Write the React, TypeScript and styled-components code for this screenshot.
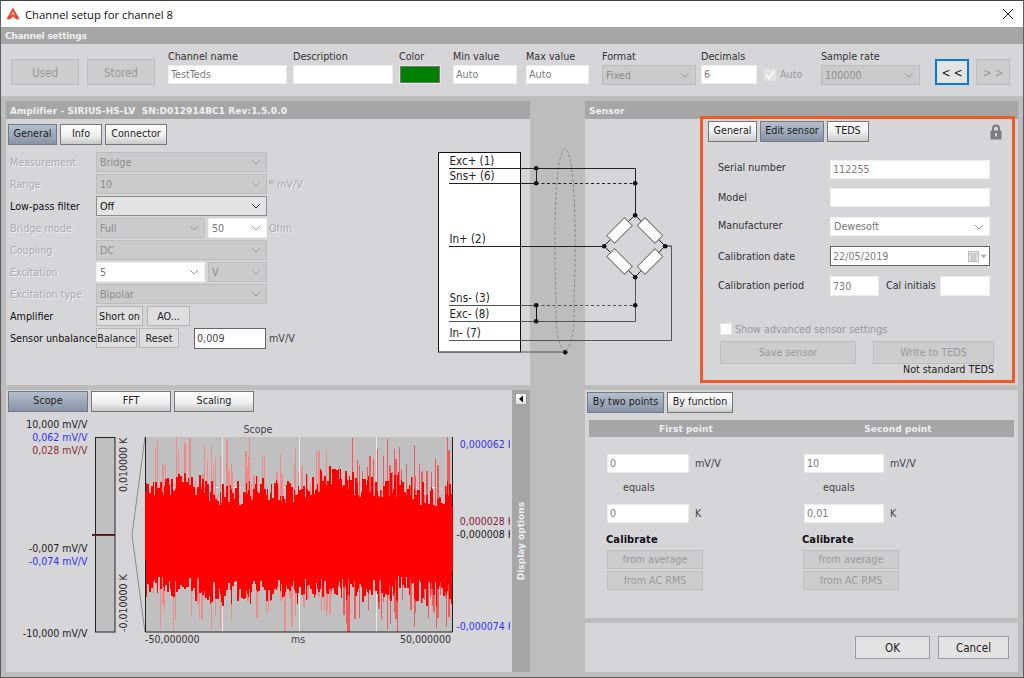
import React, { useMemo } from 'react';
import styled, { createGlobalStyle } from 'styled-components';

const GlobalStyle = createGlobalStyle`
  html, body { margin: 0; padding: 0; }
  body {
    width: 1024px;
    height: 678px;
    overflow: hidden;
    font-family: "DejaVu Sans Condensed", "Noto Sans", sans-serif;
    font-stretch: condensed;
    font-size: 10.7px;
    color: #222;
  }
  * { box-sizing: border-box; }
`;

const Window = styled.div`
  width: 1024px;
  height: 678px;
  display: flex;
  flex-direction: column;
  border: 1px solid #5f5f5f;
  border-top-color: #444;
  background: #d6d5d8;
`;

const TitleBar = styled.div`
  height: 26px;
  flex: none;
  display: flex;
  align-items: center;
  padding: 0 9px 0 5px;
  background: #fff;
  font-family: "Open Sans", sans-serif;
  font-stretch: normal;
  font-size: 11.3px;
  color: #111;
  gap: 5px;
  svg:last-child { margin-left: auto; }
`;

const Bar = styled.div<{ $h?: number; $ls?: number }>`
  height: ${(p) => p.$h ?? 18}px;
  flex: none;
  display: flex;
  align-items: center;
  padding: 1px 4px 0;
  background: #a6a6a6;
  color: #f0f0f0;
  font-family: "DejaVu Sans", sans-serif;
  font-stretch: normal;
  font-weight: 700;
  font-size: 9px;
  letter-spacing: ${(p) => p.$ls ?? 0.08}px;
`;

const Toolbar = styled.div`
  height: 52px;
  flex: none;
  display: flex;
  align-items: flex-start;
  padding: 5px 0 0 10px;
  background: #d6d5d8;
`;

const ToolButton = styled.div<{ $w: number; $ml?: number; $focus?: boolean }>`
  width: ${(p) => p.$w}px;
  margin-left: ${(p) => p.$ml ?? 0}px;
  height: 26px;
  margin-top: 10px;
  padding-top: 2px;
  display: flex;
  align-items: center;
  justify-content: center;
  flex: none;
  font-size: 11.5px;
  background: ${(p) => (p.$focus ? '#e4e4e4' : '#cdcdcd')};
  border: ${(p) => (p.$focus ? '2px solid #0a78d7' : '1px solid #bcbcbc')};
  color: ${(p) => (p.$focus ? '#111' : '#9a9a9a')};
`;

const ToolField = styled.div<{ $w: number; $ml: number }>`
  width: ${(p) => p.$w}px;
  margin-left: ${(p) => p.$ml}px;
  flex: none;
  display: flex;
  flex-direction: column;
`;

const ToolLabel = styled.div`
  height: 16px;
  line-height: 16px;
  color: #333;
  white-space: nowrap;
`;

const Field = styled.div<{ $w?: number; $dark?: boolean }>`
  width: ${(p) => (p.$w ? `${p.$w}px` : '100%')};
  height: 19px;
  flex: none;
  display: flex;
  align-items: center;
  padding: 0 2px;
  background: #fff;
  color: #7c7c7c;
  border: ${(p) => (p.$dark ? '1px solid #666' : '1px solid #ececec')};
  white-space: nowrap;
`;

const ColorSwatch = styled.div`
  height: 19px;
  background: #008000;
  border: 1px solid #e8e8e8;
  outline: 1px solid #777;
  outline-offset: -2px;
`;

const AutoCheck = styled.div`
  margin: 16px 0 0 7px;
  width: 46px;
  height: 19px;
  flex: none;
  display: flex;
  align-items: center;
  gap: 4px;
  color: #9a9a9a;
`;

const Body = styled.div`
  position: relative;
  flex: 1;
  display: grid;
  grid-template-columns: 524px 433px;
  justify-content: space-between;
  padding: 5px;
  background: #bdbdbd;
  min-height: 0;
`;

const Column = styled.div`
  display: flex;
  flex-direction: column;
  gap: 5px;
  min-height: 0;
`;

const Panel = styled.div<{ $h?: number }>`
  background: #d6d5d8;
  display: flex;
  flex-direction: column;
  flex: ${(p) => (p.$h ? 'none' : '1')};
  height: ${(p) => (p.$h ? `${p.$h}px` : 'auto')};
  min-height: 0;
`;

const Tabs = styled.div<{ $pad?: string }>`
  display: flex;
  gap: 3px;
  padding: ${(p) => p.$pad ?? '5px 0 0 2px'};
  flex: none;
`;

const Tab = styled.div<{ $w: number; $active?: boolean; $h?: number }>`
  width: ${(p) => p.$w}px;
  height: ${(p) => p.$h ?? 21}px;
  flex: none;
  display: flex;
  align-items: center;
  justify-content: center;
  padding-bottom: 2px;
  color: #222;
  border: 1px solid ${(p) => (p.$active ? '#727a86' : '#777')};
  background: ${(p) =>
    p.$active
      ? 'linear-gradient(#b4c0ce, #8894a6)'
      : 'linear-gradient(#fdfdfd, #f0f0f0 55%, #c9c9c9)'};
  white-space: nowrap;
`;

const AmpForm = styled.div`
  display: grid;
  grid-template-columns: 86px 171px auto;
  grid-auto-rows: 20px;
  row-gap: 2px;
  padding: 7px 0 0 4px;
  align-items: center;
`;

const RowLabel = styled.div<{ $on?: boolean }>`
  color: ${(p) => (p.$on ? '#111' : '#aaa')};
  text-shadow: ${(p) => (p.$on ? 'none' : '1px 1px 0 #f3f3f3')};
  white-space: nowrap;
`;

const ComboBox = styled.div<{ $tone?: 'off' | 'on' | 'white'; $w?: number; $h?: number }>`
  width: ${(p) => (p.$w ? `${p.$w}px` : '100%')};
  height: ${(p) => p.$h ?? 20}px;
  flex: none;
  display: flex;
  align-items: center;
  justify-content: space-between;
  padding: 0 5px 0 3px;
  background: ${(p) => (p.$tone === 'white' ? '#fff' : p.$tone === 'on' ? '#e3e3e3' : '#cbcbcb')};
  border: 1px solid ${(p) => (p.$tone === 'on' ? '#8c8c8c' : p.$tone === 'white' ? '#f0f0f0' : '#bcbcbc')};
  color: ${(p) => (p.$tone === 'on' ? '#111' : p.$tone === 'white' ? '#777' : '#8c8c8c')};
  white-space: nowrap;
`;

const SplitCell = styled.div`
  display: flex;
  justify-content: space-between;
`;

const UnitCell = styled.div<{ $on?: boolean }>`
  padding-left: 2px;
  display: flex;
  align-items: center;
  gap: 2px;
  color: ${(p) => (p.$on ? '#444' : '#aaa')};
  text-shadow: ${(p) => (p.$on ? 'none' : '1px 1px 0 #f3f3f3')};
  white-space: nowrap;
`;

const ButtonRow = styled.div`
  display: flex;
  align-items: center;
`;

const SmallButton = styled.div<{ $w: number; $ml?: number }>`
  width: ${(p) => p.$w}px;
  margin-left: ${(p) => p.$ml ?? 0}px;
  height: 20px;
  flex: none;
  display: flex;
  align-items: center;
  justify-content: center;
  background: #dedede;
  border: 1px solid #b5b5b5;
  color: #222;
  white-space: nowrap;
`;

const ScopeRow = styled.div`
  flex: 1;
  display: flex;
  min-height: 0;
`;

const ScopeMain = styled.div`
  width: 506px;
  flex: none;
  display: flex;
  flex-direction: column;
`;

const ScopeSvg = styled.svg`
  display: block;
  width: 506px;
  height: 257px;
  margin-top: 3px;
`;

const SideStrip = styled.div`
  flex: 1;
  background: #a6a6a6;
  position: relative;
  display: flex;
  align-items: center;
  justify-content: center;
`;

const SideText = styled.div`
  writing-mode: vertical-rl;
  transform: rotate(180deg);
  color: #efefef;
  font-family: "DejaVu Sans", sans-serif;
  font-stretch: normal;
  font-weight: 700;
  font-size: 9px;
  margin-top: 20px;
`;

const SideButton = styled.div`
  position: absolute;
  top: 3px;
  left: 3px;
  width: 12px;
  height: 12px;
  background: linear-gradient(#fff, #e2e2e2);
  border: 1px solid #999;
  display: flex;
  align-items: center;
  justify-content: center;
`;

const DiagramSvg = styled.svg`
  position: absolute;
  left: 429px;
  top: 44px;
  width: 250px;
  height: 220px;
  font-family: "DejaVu Sans Condensed", "Noto Sans", sans-serif;
  font-stretch: condensed;
`;

const SensorBody = styled.div`
  flex: 1;
  display: flex;
  justify-content: flex-end;
  min-height: 0;
  padding-right: 3px;
`;

const SensorBox = styled.div`
  width: 315px;
  height: 267px;
  margin-top: -3px;
  border: 3px solid #f15a22;
  display: flex;
  flex-direction: column;
  position: relative;
`;

const LockIcon = styled.svg`
  position: absolute;
  right: 10px;
  top: 5px;
`;

const SensorForm = styled.div`
  display: flex;
  flex-direction: column;
  padding: 18px 0 0 15px;
`;

const SensorRow = styled.div<{ $mb: number }>`
  display: flex;
  align-items: center;
  margin-bottom: ${(p) => p.$mb}px;
`;

const SensorLabel = styled.div<{ $w: number; $up?: number }>`
  width: ${(p) => p.$w}px;
  flex: none;
  color: #333;
  white-space: nowrap;
  padding-bottom: ${(p) => (p.$up ?? 0) * 2}px;
`;

const InitialsLabel = styled(SensorLabel)`
  margin-left: 7px;
`;

const DateIcons = styled.div`
  display: flex;
  align-items: center;
  gap: 1px;
`;

const AdvancedRow = styled.div`
  display: flex;
  align-items: center;
  gap: 3px;
  margin: 27px 0 0 2px;
  color: #9a9a9a;
  height: 12px;
`;

const CheckBox = styled.div<{ $grey?: boolean }>`
  width: 12px;
  height: 12px;
  flex: none;
  display: flex;
  align-items: center;
  justify-content: center;
  background: ${(p) => (p.$grey ? '#e2e2e2' : '#fff')};
  border: 1px solid #e4e4e4;
`;

const SaveRow = styled.div`
  display: flex;
  margin: 6px 0 0 2px;
  gap: 17px;
`;

const GreyButton = styled.div<{ $w: number; $h?: number; $ml?: number }>`
  width: ${(p) => p.$w}px;
  height: ${(p) => p.$h ?? 23}px;
  margin-left: ${(p) => p.$ml ?? 0}px;
  flex: none;
  display: flex;
  align-items: center;
  justify-content: center;
  background: #cdcdcd;
  border: 1px solid #bdbdbd;
  color: #9a9a9a;
  white-space: nowrap;
`;

const TedsNote = styled.div`
  text-align: right;
  color: #222;
  line-height: 12px;
  padding-right: 18px;
`;

const PointHead = styled(Bar)`
  margin: 7px 4px 0;
  height: 17px;
  display: grid;
  grid-template-columns: 194px 230px;
  justify-items: center;
  padding: 0;
`;

const PointGrid = styled.div`
  display: grid;
  grid-template-columns: 197px 200px;
  padding: 17px 0 0 22px;
`;

const PointCol = styled.div`
  display: flex;
  flex-direction: column;
`;

const PointRow = styled.div`
  display: flex;
  align-items: center;
  gap: 6px;
  color: #444;
`;

const Equals = styled.div<{ $ml: number }>`
  margin: 8px 0 10px ${(p) => p.$ml}px;
  height: 13px;
  line-height: 13px;
  color: #444;
`;

const CalibrateTitle = styled.div<{ $ml: number }>`
  margin: 10px 0 4px ${(p) => p.$ml}px;
  height: 13px;
  line-height: 13px;
  font-weight: 700;
  font-size: 11px;
  letter-spacing: 0.1px;
  color: #111;
`;

const CalButton = styled(GreyButton)`
  margin-bottom: 2px;
`;

const Footer = styled.div`
  flex: 1;
  display: flex;
  justify-content: flex-end;
  align-items: center;
  gap: 8px;
  padding: 0 9px 0 0;
`;

const FooterButton = styled.div<{ $w: number }>`
  width: ${(p) => p.$w}px;
  height: 23px;
  display: flex;
  align-items: center;
  justify-content: center;
  background: #e3e3e3;
  border: 1px solid #9b9b9b;
  color: #222;
  font-size: 11.5px;
`;

const AmpValue = styled(Field).attrs({ $w: 72, $dark: true })`
  margin-left: 15px;
  height: 21px;
  color: #444;
`;

const TallField = styled(Field)`
  height: 20px;
`;

const DateField = styled(TallField)`
  justify-content: space-between;
`;

function Chevron({ color = '#9a9a9a' }: { color?: string }) {
  return (
    <svg width="10" height="6" viewBox="0 0 10 6">
      <path d="M1 1 L5 5 L9 1" fill="none" stroke={color} strokeWidth="1" />
    </svg>
  );
}

function Combo({
  children,
  tone,
  w,
  h,
}: {
  children: React.ReactNode;
  tone?: 'off' | 'on' | 'white';
  w?: number;
  h?: number;
}) {
  return (
    <ComboBox $tone={tone} $w={w} $h={h}>
      {children}
      <Chevron color={tone === 'on' ? '#333' : '#9a9a9a'} />
    </ComboBox>
  );
}

function Logo() {
  return (
    <svg width="14" height="14" viewBox="0 0 14 14">
      <path d="M7 0.5 L13.5 12 L10.5 12.5 L7 9.5 L3.5 12.5 L0.5 12 Z" fill="#e8452c" />
      <path d="M7 4 L9.5 8.8 L7 7.2 L4.5 8.8 Z" fill="#f6b5a5" />
    </svg>
  );
}

function Diagram() {
  const dots = [
    [536, 168], [536, 183], [635, 183], [635, 215], [604, 246], [665, 246], [635, 277],
    [536, 305], [536, 321], [635, 305], [565, 352],
  ];
  const resistors = [
    [619.5, 230.5, -45], [650, 230.5, 45], [619.5, 261.5, 45], [650, 261.5, -45],
  ];
  const labels: [string, number][] = [
    ['Exc+ (1)', 165], ['Sns+ (6)', 180], ['In+ (2)', 243], ['Sns- (3)', 302], ['Exc- (8)', 318], ['In- (7)', 337],
  ];
  return (
    <DiagramSvg viewBox="430 140 250 220">
      <rect x="438.5" y="152.5" width="82" height="199.5" fill="#fff" stroke="#111" />
      <path
        d="M556 300 C553 220 556 150 565 149 C574 150 577 220 574 300 C575 330 572 345 565 352 C558 345 555 330 556 300 Z"
        fill="none" stroke="#8a8a8a" strokeDasharray="3 2"
      />
      <g fill="none" stroke="#222">
        <path d="M449 168.5 H635.5 V215" />
        <path d="M449 183.5 H536" />
        <path d="M536 183.5 H635" strokeDasharray="3 2.5" />
        <path d="M536.5 168 V183" />
        <path d="M449 246.5 H604" />
        <path d="M635 215 L665 246 H671.5" />
        <path d="M635 215 L604 246 L635 277 L665 246" />
      </g>
      <g fill="none" stroke="#555">
        <path d="M449 305.5 H536" />
        <path d="M536 305.5 H635" strokeDasharray="3 2.5" />
        <path d="M449 321.5 H635.5 V277" />
        <path d="M536.5 305 V321" stroke="#111" />
        <path d="M671.5 246 V340.5 H449" />
        <path d="M520 352 H565" />
      </g>
      {resistors.map(([x, y, a]) => (
        <rect
          key={`${x}-${y}`}
          x={x - 12.5}
          y={y - 5.5}
          width="25"
          height="11"
          fill="#fff"
          stroke="#777"
          transform={`rotate(${a} ${x} ${y})`}
        />
      ))}
      {dots.map(([x, y]) => (
        <circle key={`${x}-${y}`} cx={x + 0.2} cy={y + 0.2} r="2.3" fill="#111" />
      ))}
      <g fontSize="11.5" fill="#222">
        {labels.map(([t, y]) => (
          <text key={t} x="449.5" y={y}>{t}</text>
        ))}
      </g>
    </DiagramSvg>
  );
}

// seeded so the noise stays the same from one run to the next
function makeNoise(seed: number) {
  let s = seed;
  return () => {
    s = (s * 16807) % 2147483647;
    return (s - 1) / 2147483646;
  };
}

function ScopeChart() {
  const bars = useMemo(() => {
    const rnd = makeNoise(48271);
    const out: { x: number; w: number; sw: number; t: number; b: number; st: number; sb: number }[] = [];
    let x = 146;
    while (x < 452) {
      const w = rnd() > 0.5 ? 2 : 1;
      const wave = Math.sin(x / 31) * 5 + Math.sin(x / 11) * 3;
      const t = Math.round(487 + wave + (rnd() - 0.5) * 26);
      const b = Math.round(590 + wave * 0.6 + (rnd() - 0.5) * 26);
      const st = rnd() > 0.62 ? t - rnd() * 44 - 4 : t;
      const sb = rnd() > 0.62 ? b + rnd() * 38 + 4 : b;
      out.push({
        x,
        w: Math.min(w, 452 - x),
        sw: rnd() > 0.6 ? 2 : 1,
        t,
        b,
        st: Math.round(Math.max(437, st)),
        sb: Math.round(Math.min(632, sb)),
      });
      x += w;
    }
    return out;
  }, []);

  const left: [string, number, string][] = [
    ['10,000 mV/V', 428, '#222'],
    ['0,062 mV/V', 441, '#3333ee'],
    ['0,028 mV/V', 454, '#8a3030'],
    ['-0,007 mV/V', 552, '#222'],
    ['-0,074 mV/V', 565, '#3333ee'],
    ['-10,000 mV/V', 637, '#222'],
  ];
  const right: [string, number, string][] = [
    ['0,000062 K', 448, '#3333ee'],
    ['0,000028 K', 525, '#8a2040'],
    ['-0,000008 K', 538, '#222'],
    ['-0,000074 K', 630, '#3333ee'],
  ];

  return (
    <ScopeSvg viewBox="6 415 506 257" fontSize="10.5">
      <defs>
        <clipPath id="rightLabels">
          <rect x="453" y="430" width="57" height="210" />
        </clipPath>
      </defs>
      {left.map(([t, y, c]) => (
        <text key={t} x="87.5" y={y} textAnchor="end" fill={c}>{t}</text>
      ))}
      <rect x="95.5" y="437.5" width="19.5" height="194.5" fill="#c0c0c0" stroke="#222" />
      <path d="M92 534.5 H115" stroke="#222" />
      <path d="M92 535.5 H115" stroke="#8a1a1a" />
      <text transform="translate(127 492) rotate(-90)" fill="#333">0,010000 K</text>
      <text transform="translate(127 632) rotate(-90)" fill="#333">-0,010000 K</text>
      <path d="M145 437 L132 535 L145 632" fill="none" stroke="#8c8c8c" />
      <text x="258" y="433" textAnchor="middle" fill="#444">Scope</text>

      <rect x="145" y="437" width="307" height="195" fill="#c0c0c0" />
      {[222, 299, 376].map((x) => (
        <path key={x} d={`M${x}.5 437 V632`} stroke="#e9e9e9" />
      ))}
      {[487, 583].map((y) => (
        <path key={y} d={`M145 ${y}.5 H452`} stroke="#e9e9e9" strokeDasharray="8 14" />
      ))}
      <g shapeRendering="crispEdges">
        {bars.map((b) => (
          <rect
            key={b.x}
            x={b.x}
            y={b.st}
            width={b.sw}
            height={b.sb - b.st}
            fill={b.x > 340 ? '#f05a5a' : '#ef8a8a'}
          />
        ))}
        {bars.map((b) => (
          <rect key={b.x} x={b.x} y={b.t} width={b.w} height={b.b - b.t} fill="#ff0000" />
        ))}
      </g>
      <path d="M145.5 437 V632 H452.5 V437" fill="none" stroke="#222" />
      <path d="M145.5 492 V560 M452.5 506 V571" stroke="#ff0000" />

      <g clipPath="url(#rightLabels)">
        {right.map(([t, y, c]) => (
          <text key={t} x="514" y={y} textAnchor="end" fill={c}>{t}</text>
        ))}
      </g>
      <text x="145" y="643" fill="#333">-50,000000</text>
      <text x="298" y="643" textAnchor="middle" fill="#444">ms</text>
      <text x="451" y="643" textAnchor="end" fill="#333">50,000000</text>
    </ScopeSvg>
  );
}

function PointColumn({
  w,
  value,
  target,
  equalsAt,
  titleAt,
  btnAt,
}: {
  w: number;
  value: string;
  target: string;
  equalsAt: number;
  titleAt: number;
  btnAt: number;
}) {
  return (
    <PointCol>
      <PointRow>
        <Field $w={w}>{value}</Field>
        mV/V
      </PointRow>
      <Equals $ml={equalsAt}>equals</Equals>
      <PointRow>
        <Field $w={w}>{target}</Field>
        K
      </PointRow>
      <CalibrateTitle $ml={titleAt}>Calibrate</CalibrateTitle>
      <CalButton $w={96} $h={19} $ml={btnAt}>from average</CalButton>
      <CalButton $w={96} $h={19} $ml={btnAt}>from AC RMS</CalButton>
    </PointCol>
  );
}

export default function App() {
  return (
    <>
      <GlobalStyle />
      <Window>
        <TitleBar>
          <Logo />
          Channel setup for channel 8
          <svg width="12" height="12" viewBox="0 0 12 12">
            <path d="M1 1 L11 11 M11 1 L1 11" stroke="#222" strokeWidth="1" />
          </svg>
        </TitleBar>
        <Bar $h={17} $ls={-0.25}>Channel settings</Bar>
        <Toolbar>
          <ToolButton $w={68}>Used</ToolButton>
          <ToolButton $w={68} $ml={8}>Stored</ToolButton>
          <ToolField $w={119} $ml={13}>
            <ToolLabel>Channel name</ToolLabel>
            <Field>TestTeds</Field>
          </ToolField>
          <ToolField $w={100} $ml={6}>
            <ToolLabel>Description</ToolLabel>
            <Field />
          </ToolField>
          <ToolField $w={42} $ml={6}>
            <ToolLabel>Color</ToolLabel>
            <ColorSwatch />
          </ToolField>
          <ToolField $w={64} $ml={12}>
            <ToolLabel>Min value</ToolLabel>
            <Field>Auto</Field>
          </ToolField>
          <ToolField $w={63} $ml={9}>
            <ToolLabel>Max value</ToolLabel>
            <Field>Auto</Field>
          </ToolField>
          <ToolField $w={94} $ml={13}>
            <ToolLabel>Format</ToolLabel>
            <Combo h={20}>Fixed</Combo>
          </ToolField>
          <ToolField $w={56} $ml={5}>
            <ToolLabel>Decimals</ToolLabel>
            <Field>6</Field>
          </ToolField>
          <AutoCheck>
            <CheckBox $grey>
              <svg width="10" height="10" viewBox="0 0 10 10">
                <path d="M1 5 L4 8.5 L9 1" fill="none" stroke="#fff" strokeWidth="1.4" />
              </svg>
            </CheckBox>
            Auto
          </AutoCheck>
          <ToolField $w={99} $ml={11}>
            <ToolLabel>Sample rate</ToolLabel>
            <Combo h={20}>100000</Combo>
          </ToolField>
          <ToolButton $w={34} $ml={15} $focus>{'< <'}</ToolButton>
          <ToolButton $w={34} $ml={7}>{'> >'}</ToolButton>
        </Toolbar>
        <Body>
          <Column>
            <Panel $h={284}>
              <Bar>Amplifier - SIRIUS-HS-LV&nbsp; SN:D012914BC1 Rev:1.5.0.0</Bar>
              <Tabs>
                <Tab $w={49} $active>General</Tab>
                <Tab $w={42}>Info</Tab>
                <Tab $w={62}>Connector</Tab>
              </Tabs>
              <AmpForm>
                <RowLabel>Measurement</RowLabel>
                <Combo>Bridge</Combo>
                <span />
                <RowLabel>Range</RowLabel>
                <Combo>10</Combo>
                <UnitCell>
                  <svg width="6" height="8" viewBox="0 0 6 8">
                    <path d="M0.5 1 H5.5 M0.5 3 H4 M0.5 1 V4" fill="none" stroke="#aaa" />
                  </svg>
                  mV/V
                </UnitCell>
                <RowLabel $on>Low-pass filter</RowLabel>
                <Combo tone="on">Off</Combo>
                <span />
                <RowLabel>Bridge mode</RowLabel>
                <SplitCell>
                  <Combo w={109}>Full</Combo>
                  <Combo w={59} tone="white">50</Combo>
                </SplitCell>
                <UnitCell>Ohm</UnitCell>
                <RowLabel>Coupling</RowLabel>
                <Combo>DC</Combo>
                <span />
                <RowLabel>Excitation</RowLabel>
                <SplitCell>
                  <Combo w={109} tone="white">5</Combo>
                  <Combo w={59}>V</Combo>
                </SplitCell>
                <span />
                <RowLabel>Excitation type</RowLabel>
                <Combo>Bipolar</Combo>
                <span />
                <RowLabel $on>Amplifier</RowLabel>
                <ButtonRow>
                  <SmallButton $w={47}>Short on</SmallButton>
                  <SmallButton $w={43} $ml={4}>AO...</SmallButton>
                </ButtonRow>
                <span />
                <RowLabel $on>Sensor unbalance</RowLabel>
                <ButtonRow>
                  <SmallButton $w={41}>Balance</SmallButton>
                  <SmallButton $w={40} $ml={2}>Reset</SmallButton>
                  <AmpValue>0,009</AmpValue>
                </ButtonRow>
                <UnitCell $on>mV/V</UnitCell>
              </AmpForm>
            </Panel>
            <Panel>
              <ScopeRow>
                <ScopeMain>
                  <Tabs $pad="1px 0 0 2px">
                    <Tab $w={80} $active>Scope</Tab>
                    <Tab $w={80}>FFT</Tab>
                    <Tab $w={80}>Scaling</Tab>
                  </Tabs>
                  <ScopeChart />
                </ScopeMain>
                <SideStrip>
                  <SideButton>
                    <svg width="6" height="8" viewBox="0 0 6 8">
                      <path d="M5 0.5 V7.5 L1 4 Z" fill="#111" />
                    </svg>
                  </SideButton>
                  <SideText>Display options</SideText>
                </SideStrip>
              </ScopeRow>
            </Panel>
          </Column>
          <Column>
            <Panel $h={284}>
              <Bar>Sensor</Bar>
              <SensorBody>
                <SensorBox>
                  <Tabs $pad="2px 0 0 5px">
                    <Tab $w={49}>General</Tab>
                    <Tab $w={64} $active>Edit sensor</Tab>
                    <Tab $w={42}>TEDS</Tab>
                  </Tabs>
                  <LockIcon width="12" height="16" viewBox="0 0 12 16">
                    <path d="M3 7 V4.5 a3 3 0 0 1 6 0 V7" fill="none" stroke="#7c7c7c" strokeWidth="2" />
                    <rect x="0.5" y="6.5" width="11" height="9" rx="1" fill="#7c7c7c" />
                    <rect x="5" y="9" width="2" height="3.5" fill="#d6d5d8" />
                  </LockIcon>
                  <SensorForm>
                    <SensorRow $mb={9}>
                      <SensorLabel $w={112} $up={2}>Serial number</SensorLabel>
                      <Field $w={160}>112255</Field>
                    </SensorRow>
                    <SensorRow $mb={10}>
                      <SensorLabel $w={112}>Model</SensorLabel>
                      <Field $w={160} />
                    </SensorRow>
                    <SensorRow $mb={10}>
                      <SensorLabel $w={112} $up={1}>Manufacturer</SensorLabel>
                      <Combo tone="white" w={160} h={19}>Dewesoft</Combo>
                    </SensorRow>
                    <SensorRow $mb={10}>
                      <SensorLabel $w={112}>Calibration date</SensorLabel>
                      <DateField $w={160} $dark>
                        22/05/2019
                        <DateIcons>
                          <svg width="11" height="11" viewBox="0 0 11 11">
                            <rect x="0.5" y="0.5" width="10" height="10" fill="#eee" stroke="#bbb" />
                            <path d="M0.5 3 H10.5 M2.5 5 H8.5 M2.5 7 H8.5 M2.5 9 H8.5" stroke="#aaa" />
                          </svg>
                          <svg width="7" height="5" viewBox="0 0 7 5">
                            <path d="M0 0.5 H7 L3.5 4.5 Z" fill="#b5b5b5" />
                          </svg>
                        </DateIcons>
                      </DateField>
                    </SensorRow>
                    <SensorRow $mb={0}>
                      <SensorLabel $w={112} $up={1}>Calibration period</SensorLabel>
                      <TallField $w={49}>730</TallField>
                      <InitialsLabel $w={54} $up={1}>Cal initials</InitialsLabel>
                      <TallField $w={50} />
                    </SensorRow>
                    <AdvancedRow>
                      <CheckBox />
                      Show advanced sensor settings
                    </AdvancedRow>
                    <SaveRow>
                      <GreyButton $w={136}>Save sensor</GreyButton>
                      <GreyButton $w={121}>Write to TEDS</GreyButton>
                    </SaveRow>
                    <TedsNote>Not standard TEDS</TedsNote>
                  </SensorForm>
                </SensorBox>
              </SensorBody>
            </Panel>
            <Panel $h={228}>
              <Tabs $pad="2px 0 0 2px">
                <Tab $w={77} $active>By two points</Tab>
                <Tab $w={66}>By function</Tab>
              </Tabs>
              <PointHead>
                <span>First point</span>
                <span>Second point</span>
              </PointHead>
              <PointGrid>
                <PointColumn w={82} value="0" target="0" equalsAt={16} titleAt={-1} btnAt={0} />
                <PointColumn w={80} value="10" target="0,01" equalsAt={19} titleAt={-2} btnAt={-1} />
              </PointGrid>
            </Panel>
            <Panel>
              <Footer>
                <FooterButton $w={75}>OK</FooterButton>
                <FooterButton $w={71}>Cancel</FooterButton>
              </Footer>
            </Panel>
          </Column>
          <Diagram />
        </Body>
      </Window>
    </>
  );
}
